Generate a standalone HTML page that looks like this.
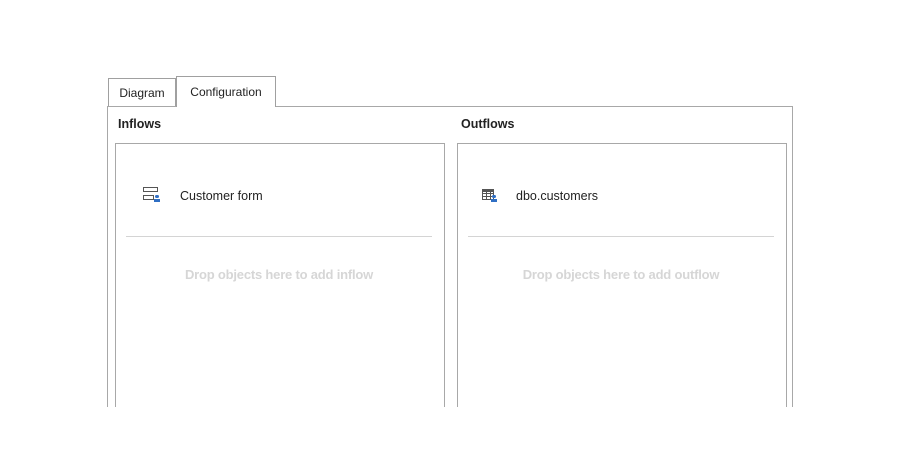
<!DOCTYPE html>
<html><head><meta charset="utf-8"><style>
*{margin:0;padding:0;box-sizing:border-box}
body{width:900px;height:450px;background:#fff;position:relative;overflow:hidden;font-family:"Liberation Sans",sans-serif;font-size:12px;color:#222}
.a{position:absolute}
.tab{position:absolute;border:1px solid #a0a0a0;border-bottom:none;background:#fff;text-align:center}
.pane{position:absolute;border-left:1px solid #a8a8a8;border-right:1px solid #a8a8a8;top:106px;height:301px}
.box{position:absolute;border:1px solid #a8a8a8;border-bottom:none;top:143px;height:264px}
.hdr{position:absolute;font-weight:bold;font-size:12.5px;top:117px}
.sep{position:absolute;height:1px;background:#d4d4d4;top:236px}
.drop{position:absolute;top:267px;color:#d6d6d6;font-size:13px;text-align:center;font-weight:bold;letter-spacing:-0.2px}
</style></head><body>
<div class="a" style="left:107px;top:106px;width:686px;height:1px;background:#a8a8a8"></div>
<div class="pane" style="left:107px;width:686px"></div>
<div class="tab" style="left:108px;top:78px;width:68px;height:28px;line-height:28px">Diagram</div>
<div class="tab" style="left:176px;top:76px;width:100px;height:31px;line-height:31px">Configuration</div>
<div class="hdr" style="left:118px">Inflows</div>
<div class="hdr" style="left:461px">Outflows</div>
<div class="box" style="left:115px;width:330px"></div>
<div class="box" style="left:457px;width:330px"></div>
<div class="a" style="left:143px;top:187px;width:15px;height:5px;border:1px solid #555"></div>
<div class="a" style="left:143px;top:195px;width:11px;height:5px;border:1px solid #555"></div>
<div class="a" style="left:155px;top:195px;width:4px;height:3px;background:#2f6fc4;border-radius:2px"></div>
<div class="a" style="left:154px;top:199px;width:6px;height:3px;background:#2f6fc4"></div>
<div class="a" style="left:180px;top:189px;font-size:12.5px">Customer form</div>
<div class="a" style="left:482px;top:189px;width:12px;height:11px;border:1px solid #555;background:repeating-linear-gradient(90deg,transparent 0 3px,#555 3px 4px),repeating-linear-gradient(0deg,transparent 0 2px,#555 2px 3px)"></div>
<div class="a" style="left:482px;top:189px;width:12px;height:3px;background:#555"></div>
<div class="a" style="left:492px;top:195px;width:4px;height:3px;background:#2f6fc4;border-radius:2px"></div>
<div class="a" style="left:491px;top:199px;width:6px;height:3px;background:#2f6fc4"></div>
<div class="a" style="left:516px;top:189px;font-size:12.5px">dbo.customers</div>
<div class="sep" style="left:126px;width:306px"></div>
<div class="sep" style="left:468px;width:306px"></div>
<div class="drop" style="left:126px;width:306px">Drop objects here to add inflow</div>
<div class="drop" style="left:468px;width:306px">Drop objects here to add outflow</div>
</body></html>
